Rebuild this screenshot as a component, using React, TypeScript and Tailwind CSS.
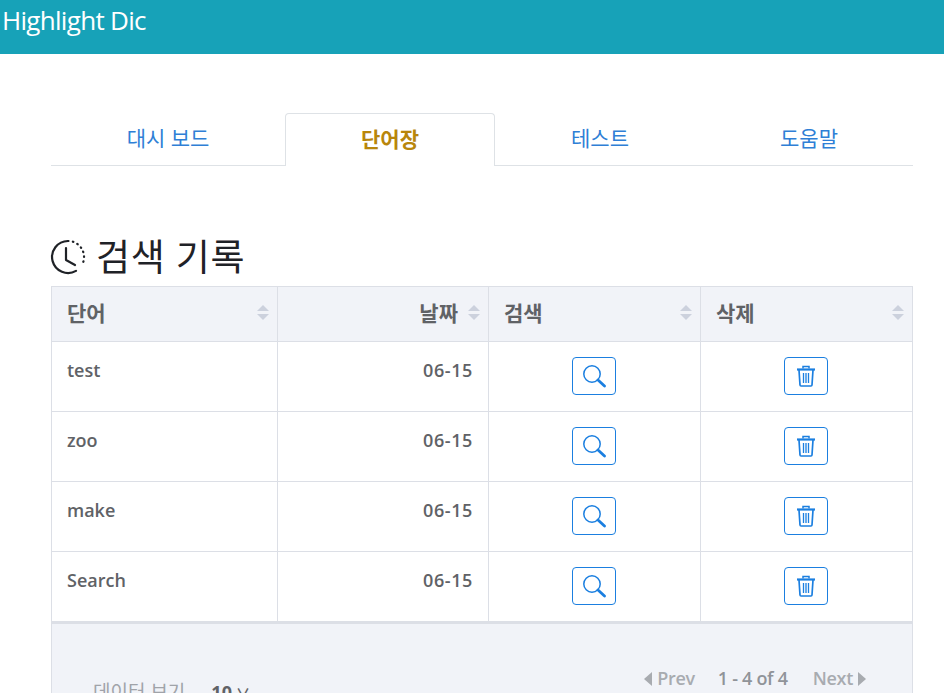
import React from 'react';

const rows = ['test', 'zoo', 'make', 'Search'];

const SortIcon: React.FC = () => (
  <svg width="12" height="15" viewBox="0 0 12 15" className="absolute right-[8px] top-[18px] text-[#ccd1dd]">
    <path d="M6 0 L12 6 H0 Z" fill="currentColor" />
    <path d="M6 15 L12 9 H0 Z" fill="currentColor" />
  </svg>
);

const ClockIcon: React.FC = () => (
  <svg width="36" height="36" viewBox="0 0 36 36" fill="none" stroke="#1f2227" strokeWidth="2.2">
    <path d="M18 2 A16 16 0 1 0 26 31.9" strokeLinecap="round" />
    <path d="M18 2 A16 16 0 0 1 31.9 26" strokeLinecap="round" strokeDasharray="0.5 4.4" />
    <path d="M16 9 V21 L25 26" strokeLinecap="round" strokeLinejoin="round" />
  </svg>
);

const SearchIcon: React.FC = () => (
  <svg width="24" height="24" viewBox="0 0 24 24" fill="none" stroke="#1b7fe0">
    <circle cx="10" cy="10" r="8.2" strokeWidth="1.5" />
    <path d="M16 16 L22.5 22" strokeWidth="2.8" strokeLinecap="round" />
  </svg>
);

const TrashIcon: React.FC = () => (
  <svg width="20" height="22" viewBox="0 0 20 22" fill="none" stroke="#1b7fe0" strokeWidth="1.7">
    <path d="M1 4.5 H19" strokeWidth="2.2" />
    <path d="M7 3.5 V1.5 H13 V3.5" strokeWidth="1.5" />
    <path d="M3 5 L4 20 Q4.1 21 5 21 H15 Q15.9 21 16 20 L17 5" />
    <path d="M7.5 8 V18 M10 8 V18 M12.5 8 V18" strokeWidth="1.3" />
  </svg>
);

const App: React.FC = () => {
  return (
    <div className="h-screen overflow-hidden bg-white font-['Open_Sans','Noto_Sans_CJK_KR',sans-serif]">
      {/* header */}
      <div className="h-[54px] bg-[#17a2b8] pl-[2px] text-[26px] leading-[40px] text-white tracking-[-0.7px]">
        Highlight Dic
      </div>

      <div className="px-[51px] pr-[31px]">
        {/* tabs */}
        <div className="mt-[59px] grid grid-cols-[234px_210px_210px_208px] h-[53px] text-[21px]">
          <div className="flex items-center justify-center border-b border-[#dee2e6] text-[#2f7fd6]">대시 보드</div>
          <div className="flex items-center justify-center rounded-t border border-b-0 border-[#dee2e6] font-bold text-[#b8860b]">단어장</div>
          <div className="flex items-center justify-center border-b border-[#dee2e6] text-[#2f7fd6]">테스트</div>
          <div className="flex items-center justify-center border-b border-[#dee2e6] text-[#2f7fd6]">도움말</div>
        </div>

        {/* title */}
        <div className="mt-[63px] flex h-[57px] items-center gap-[10px] pb-[2px] -ml-[1px]">
          <ClockIcon />
          <h1 className="text-[37px] leading-none text-[#1f2227] tracking-[0.7px]">검색 기록</h1>
        </div>

        {/* table */}
        <table className="w-[862px] table-fixed border-collapse text-[18px] font-semibold text-[#606266]">
          <colgroup>
            <col className="w-[226px]" />
            <col className="w-[211px]" />
            <col className="w-[212px]" />
            <col className="w-[212px]" />
          </colgroup>
          <thead>
            <tr className="h-[55px] bg-[#f1f3f8] text-[21px]">
              <th className="relative border border-[#dcdfe6] pl-[15px] text-left font-bold">단어<SortIcon /></th>
              <th className="relative border border-[#dcdfe6] pr-[30px] text-right font-bold">날짜<SortIcon /></th>
              <th className="relative border border-[#dcdfe6] pl-[15px] text-left font-bold">검색<SortIcon /></th>
              <th className="relative border border-[#dcdfe6] pl-[15px] text-left font-bold">삭제<SortIcon /></th>
            </tr>
          </thead>
          <tbody>
            {rows.map((word) => (
              <tr key={word} className="h-[70px]">
                <td className="border border-[#dcdfe6] pl-[15px] pt-[15px] align-top leading-[27px]">{word}</td>
                <td className="border border-[#dcdfe6] pr-[15px] pt-[15px] text-right align-top leading-[27px] tracking-[0.6px]">06-15</td>
                <td className="border border-[#dcdfe6] align-middle pb-[2px] pr-[2px]">
                  <button className="mx-auto flex h-[38px] w-[44px] items-center justify-center rounded border border-[#1b7fe0]">
                    <SearchIcon />
                  </button>
                </td>
                <td className="border border-[#dcdfe6] align-middle pb-[2px] pr-[2px]">
                  <button className="mx-auto flex h-[38px] w-[44px] items-center justify-center rounded border border-[#1b7fe0]">
                    <TrashIcon />
                  </button>
                </td>
              </tr>
            ))}
          </tbody>
        </table>

        {/* footer */}
        <div className="flex h-[120px] w-[862px] justify-between border-x border-t-2 border-[#dcdfe6] bg-[#f1f3f8] pl-[41px] pr-[46px] text-[18px] font-semibold">
          <div className="mt-[54px] flex items-center self-start gap-[26px]">
            <span className="font-normal text-[19px] text-[#a0a3a9]">데이터 보기</span>
            <span className="flex items-center gap-[4px] font-bold text-[#606266]">10 <span className="text-[14px]">∨</span></span>
          </div>
          <div className="mt-[41px] flex items-center self-start text-[#a8abb0] tracking-[-0.3px]">
            <svg width="8" height="14" viewBox="0 0 8 14" className="mr-[5px]"><path d="M8 0 V14 L0 7 Z" fill="currentColor" /></svg>
            <span>Prev</span>
            <span className="ml-[23px] text-[#909399]">1 - 4 of 4</span>
            <span className="ml-[25px]">Next</span>
            <svg width="8" height="14" viewBox="0 0 8 14" className="ml-[5px]"><path d="M0 0 V14 L8 7 Z" fill="currentColor" /></svg>
          </div>
        </div>
      </div>
    </div>
  );
};

export default App;
